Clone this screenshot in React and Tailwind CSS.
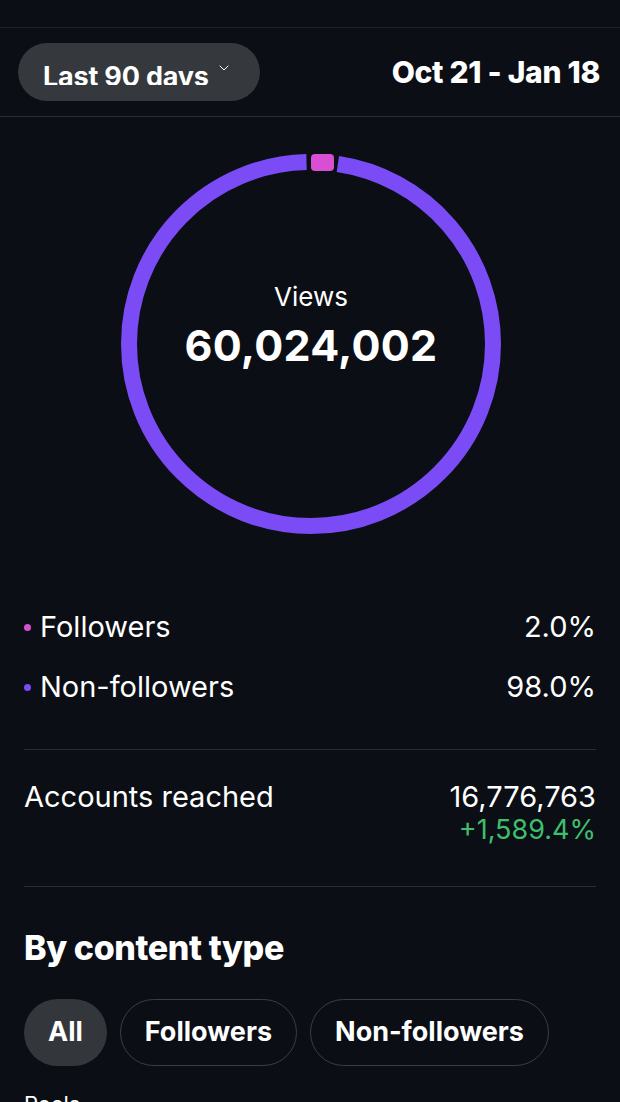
import { ChevronDown } from 'lucide-react';

const C = 2 * Math.PI * 182;

function Ring() {
  return (
    <svg width="380" height="380" viewBox="0 0 380 380" className="block">
      <circle
        cx="190"
        cy="190"
        r="182"
        fill="none"
        stroke="#7b4cf6"
        strokeWidth="16"
        strokeDasharray={`${C - 32} 32`}
        strokeDashoffset={-27}
        transform="rotate(-90 190 190)"
      />
      <rect x="190" y="0" width="23" height="17" rx="4" fill="#d94fd3" />
    </svg>
  );
}

function StatRow({ dot, label, value }) {
  return (
    <div className="flex items-center justify-between h-[60px]">
      <div className="flex items-center">
        <span className="w-[7px] h-[7px] rounded-full mr-[9px]" style={{ background: dot }} />
        <span className="text-[29px] text-white">{label}</span>
      </div>
      <span className="text-[29px] text-white">{value}</span>
    </div>
  );
}

export default function App() {
  return (
    <div className="w-[620px] h-[1102px] overflow-hidden bg-[#0b0e14] text-white" style={{ fontFamily: 'Inter, "Noto Sans", sans-serif' }}>
      <div className="h-[28px] border-b border-[#1e2127]" />

      {/* header */}
      <div className="h-[89px] border-b border-[#2a2d33] flex items-center justify-between pl-[18px] pr-[20px]">
        <div className="h-[58px] w-[242px] rounded-full bg-[#35383d] flex items-center pl-[25px]">
          <span className="block h-[19px] overflow-hidden mt-[7px]">
            <span className="block text-[27px] font-bold leading-[27px] -mt-[3px] tracking-[-0.2px]">Last 90 days</span>
          </span>
          <ChevronDown size={16} strokeWidth={1.5} className="ml-[7px] -mt-[8px]" />
        </div>
        <span className="text-[30px] font-extrabold tracking-[-0.3px]">Oct 21 - Jan 18</span>
      </div>

      {/* ring */}
      <div className="mt-[37px] flex justify-center pl-[2px]">
        <div className="relative">
          <Ring />
          <div className="absolute inset-0 flex flex-col items-center justify-center pb-[36px]">
            <span className="text-[26px] leading-[30px]">Views</span>
            <span className="text-[43px] font-bold leading-[50px] mt-[8px] tracking-[0.3px]">60,024,002</span>
          </div>
        </div>
      </div>

      <div className="px-[24px]">
        <div className="mt-[63px]">
          <StatRow dot="#d94fd3" label="Followers" value="2.0%" />
          <StatRow dot="#7b4cf6" label="Non-followers" value="98.0%" />
        </div>

        <div className="mt-[32px] border-t border-[#2a2d33] pt-[30px] pb-[40px] flex justify-between">
          <span className="text-[29px] leading-[33px]">Accounts reached</span>
          <div className="flex flex-col items-end">
            <span className="text-[29px] leading-[33px]">16,776,763</span>
            <span className="text-[27px] leading-[33px] text-[#3fbf6d]">+1,589.4%</span>
          </div>
        </div>

        <div className="border-t border-[#2a2d33]">
          <h2 className="mt-[43px] text-[34px] font-extrabold leading-[36px] tracking-[-0.4px]">By content type</h2>
          <div className="mt-[33px] flex gap-[13px]">
            <span className="h-[67px] px-[24px] rounded-full bg-[#33363b] flex items-center text-[27px] font-bold">All</span>
            <span className="h-[67px] px-[24px] rounded-full border border-[#3a3d43] flex items-center text-[27px] font-bold">Followers</span>
            <span className="h-[67px] px-[24px] rounded-full border border-[#3a3d43] flex items-center text-[27px] font-bold">Non-followers</span>
          </div>
          <div className="mt-[22px] text-[22px]">Reels</div>
        </div>
      </div>
    </div>
  );
}
